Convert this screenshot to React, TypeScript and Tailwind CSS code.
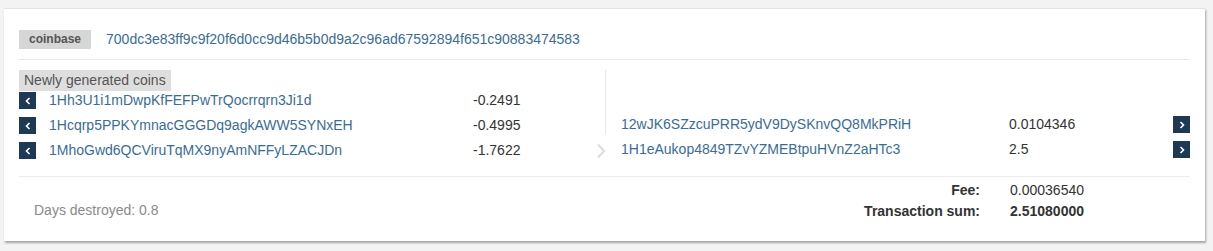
import React from 'react';

const font = { fontFamily: '"Liberation Sans", Arial, sans-serif' };

const inputs = [
  { addr: '1Hh3U1i1mDwpKfFEFPwTrQocrrqrn3Ji1d', amount: '-0.2491' },
  { addr: '1Hcqrp5PPKYmnacGGGDq9agkAWW5SYNxEH', amount: '-0.4995' },
  { addr: '1MhoGwd6QCViruTqMX9nyAmNFFyLZACJDn', amount: '-1.7622' },
];

const outputs = [
  { addr: '12wJK6SZzcuPRR5ydV9DySKnvQQ8MkPRiH', amount: '0.0104346' },
  { addr: '1H1eAukop4849TZvYZMEBtpuHVnZ2aHTc3', amount: '2.5' },
];

const Chevron = ({ dir }: { dir: 'left' | 'right' }) => (
  <svg width="6" height="8" viewBox="0 0 6 8" className="block">
    <path
      d={dir === 'left' ? 'M4.5 1 L1.5 4 L4.5 7' : 'M1.5 1 L4.5 4 L1.5 7'}
      fill="none"
      stroke="white"
      strokeWidth="1.6"
    />
  </svg>
);

const NavButton = ({ dir }: { dir: 'left' | 'right' }) => (
  <span className="mt-[1px] flex h-[17px] w-[17px] shrink-0 items-center justify-center bg-[#1d3954]">
    <Chevron dir={dir} />
  </span>
);

const App = () => {
  return (
    <div className="min-h-[251px] w-full bg-[#f3f3f3] pt-[8px] pl-[4px]" style={font}>
      <div className="h-[233px] w-[1201px] border-t border-[#e2e2e2] bg-white px-[15px] pt-[20px] shadow-[1px_2px_2px_rgba(0,0,0,0.32)]">
        {/* header */}
        <div className="flex h-[20px] items-center">
          <span className="flex h-[19px] items-center bg-[#d6d6d6] px-[10px] text-[12px] font-bold text-[#555]">
            coinbase
          </span>
          <span className="ml-[15px] text-[14px] text-[#3a6c99]">
            700dc3e83ff9c9f20f6d0cc9d46b5b0d9a2c96ad67592894f651c90883474583
          </span>
        </div>

        <div className="mt-[10px] h-px w-[1171px] bg-[#e8e8e8]" />

        {/* inputs / outputs */}
        <div className="mt-[10px] flex w-[1171px]">
          <div className="w-[576px]">
            <div className="flex h-[21px] w-fit items-center bg-[#dedede] px-[5px] text-[14px] text-[#555]">
              Newly generated coins
            </div>
            {inputs.map((row) => (
              <div key={row.addr} className="flex h-[25px] items-start text-[14px] leading-[17px]">
                <NavButton dir="left" />
                <span className="mt-[1px] ml-[13px] w-[424px] text-[#3a6c99]">{row.addr}</span>
                <span className="mt-[1px] text-[#333]">{row.amount}</span>
              </div>
            ))}
          </div>

          <div className="flex w-[20px] flex-col items-center">
            <div className="h-[65px] w-px bg-[#e6e6e6]" />
            <svg width="12" height="16" viewBox="0 0 12 16" className="mt-[8px] ml-[-8px]">
              <path d="M3 1.5 L9 8 L3 14.5" fill="none" stroke="#dedede" strokeWidth="2.2" />
            </svg>
          </div>

          <div className="flex-1 pt-[45px]">
            {outputs.map((row) => (
              <div key={row.addr} className="flex h-[25px] items-start text-[14px] leading-[17px]">
                <span className="mt-[1px] ml-[6px] w-[388px] text-[#3a6c99]">{row.addr}</span>
                <span className="mt-[1px] flex-1 text-[#333]">{row.amount}</span>
                <NavButton dir="right" />
              </div>
            ))}
          </div>
        </div>

        <div className="mt-[10px] h-px w-[1171px] bg-[#ececec]" />

        {/* footer */}
        <div className="flex w-[1171px] items-end pt-[5px] text-[14px]">
          <div className="mb-[-1px] flex-1 pl-[15px] text-[#8a8a8a]">Days destroyed: 0.8</div>
          <div className="grid grid-cols-[auto_auto] gap-x-[30px] gap-y-[4px] pr-[106px] leading-[17px] text-[#333]">
            <span className="text-right font-bold">Fee:</span>
            <span>0.00036540</span>
            <span className="text-right font-bold">Transaction sum:</span>
            <span className="font-bold">2.51080000</span>
          </div>
        </div>
      </div>
    </div>
  );
};

export default App;
